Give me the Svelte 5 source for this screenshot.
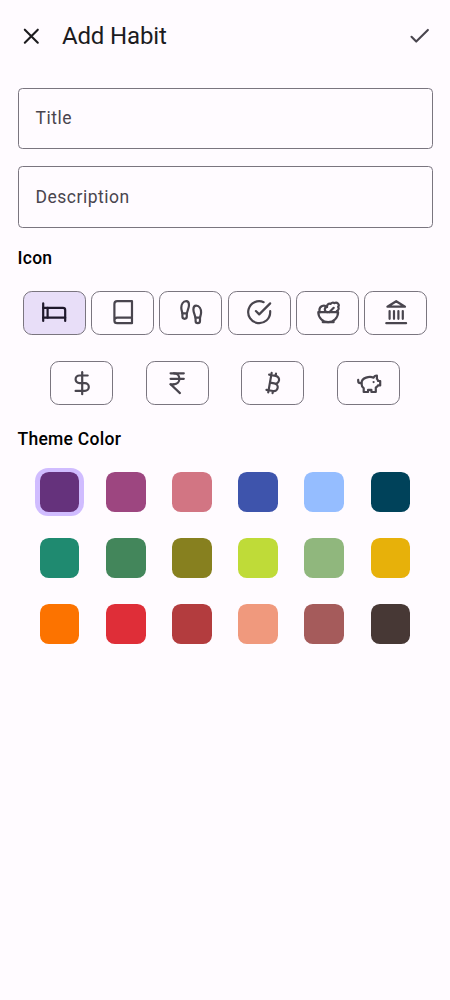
<script>
  const iconRows = [
    [
      { name: 'Bed', paths: ['M2 4v16', 'M2 8h18a2 2 0 0 1 2 2v10', 'M2 17h20', 'M6 8v9'] },
      { name: 'Book', paths: ['M4 19.5v-15A2.5 2.5 0 0 1 6.5 2H20v20H6.5a2.5 2.5 0 0 1 0-5H20'] },
      {
        name: 'Footprints',
        paths: [
          'M4 16v-2.38C4 11.5 2.97 10.5 3 8c.03-2.72 1.49-6 4.5-6C9.37 2 10 3.8 10 5.5c0 3.11-2 5.66-2 8.68V16a2 2 0 1 1-4 0Z',
          'M20 20v-2.38c0-2.12 1.03-3.12 1-5.62-.03-2.72-1.49-6-4.5-6C14.63 6 14 7.8 14 9.5c0 3.11 2 5.66 2 8.68V20a2 2 0 1 0 4 0Z',
          'M16 17h4',
          'M4 13h4'
        ]
      },
      { name: 'Check', paths: ['M22 11.08V12a10 10 0 1 1-5.93-9.14', 'm9 11 3 3L22 4'] },
      {
        name: 'Salad',
        paths: [
          'M7 21h10',
          'M12 21a9 9 0 0 0 9-9H3a9 9 0 0 0 9 9Z',
          'M11.38 12a2.4 2.4 0 0 1-.4-4.77 2.4 2.4 0 0 1 3.2-2.77 2.4 2.4 0 0 1 3.47-.63 2.4 2.4 0 0 1 3.37 3.37 2.4 2.4 0 0 1-1.1 3.7 2.51 2.51 0 0 1 .03 1.1',
          'm13 12 4-4',
          'M10.9 7.25A3.99 3.99 0 0 0 4 10c0 .73.2 1.41.54 2'
        ]
      },
      { name: 'Bank', paths: ['M3 22h18', 'M6 18v-7', 'M10 18v-7', 'M14 18v-7', 'M18 18v-7', 'M12 2l8 5H4z'] }
    ],
    [
      { name: 'Dollar', paths: ['M12 2v20', 'M17 5H9.5a3.5 3.5 0 0 0 0 7h5a3.5 3.5 0 0 1 0 7H6'] },
      { name: 'Rupee', paths: ['M6 3h12', 'M6 8h12', 'm6 13 8.5 8', 'M6 13h3', 'M9 13c6.667 0 6.667-10 0-10'] },
      {
        name: 'Bitcoin',
        paths: [
          'M11.767 19.089c4.924.868 6.14-6.025 1.216-6.894m-1.216 6.894L5.86 18.047m5.908 1.042-.347 1.97m1.563-8.864c4.924.869 6.14-6.025 1.215-6.893m-1.215 6.893-3.94-.694m5.155-6.2L8.29 4.26m5.908 1.042.348-1.97M7.48 20.364l3.126-17.727'
        ]
      },
      {
        name: 'Savings',
        paths: [
          'M19 5c-1.5 0-2.8 1.4-3 2-3.5-1.5-11-.3-11 5 0 1.8 0 3 2 4.5V20h4v-2h3v2h4v-4c1-.5 1.7-1 2-2h2v-4h-2c0-1-.5-1.5-1-2V5z',
          'M2 9v1c0 1.1.9 2 2 2h1',
          'M16 11h.01'
        ]
      }
    ]
  ];

  const colorRows = [
    ['#65327c', '#9d4680', '#d27583', '#3e54ac', '#95bdff', '#00425a'],
    ['#1f8a70', '#43865b', '#87801f', '#bfdb38', '#90b77d', '#e7b10a'],
    ['#fc7300', '#df2e38', '#b33c3e', '#f0997d', '#a55b5b', '#473835']
  ];

  let selectedIcon = $state('Bed');
  let selectedColor = $state('#65327c');
</script>

<div class="screen">
  <header>
    <button class="plain" aria-label="Close">
      <svg viewBox="0 0 24 24"><path d="M18 6.1 6.2 17.9M6.2 6.1 18 17.9" /></svg>
    </button>
    <h1>Add Habit</h1>
    <button class="plain save" aria-label="Save">
      <svg viewBox="0 0 24 24"><path d="M19.9 6.3 9.3 16.9 5 12.6" /></svg>
    </button>
  </header>

  <main>
    <div class="field">Title</div>
    <div class="field">Description</div>

    <h2>Icon</h2>
    <div class="icons">
      {#each iconRows as row}
        <div class="icon-row">
          {#each row as icon}
            <button
              class="chip"
              class:selected={selectedIcon === icon.name}
              aria-label={icon.name}
              onclick={() => (selectedIcon = icon.name)}
            >
              <svg viewBox="0 0 24 24">
                {#each icon.paths as d}<path {d} />{/each}
              </svg>
            </button>
          {/each}
        </div>
      {/each}
    </div>

    <h2 class="theme">Theme Color</h2>
    <div class="colors">
      {#each colorRows as row}
        <div class="color-row">
          {#each row as color}
            <button
              class="swatch"
              class:selected={selectedColor === color}
              aria-label={color}
              onclick={() => (selectedColor = color)}
            >
              <span style:background={color}></span>
            </button>
          {/each}
        </div>
      {/each}
    </div>
  </main>
</div>

<style>
  :global(body) {
    margin: 0;
    background: #fffbff;
  }
  .screen {
    box-sizing: border-box;
    width: 450px;
    height: 1000px;
    overflow: hidden;
    background: #fffbff;
    color: #1c1b1e;
    font-family: Roboto, sans-serif;
  }
  button {
    box-sizing: border-box;
    margin: 0;
    padding: 0;
    border: 0;
    background: none;
    color: inherit;
  }
  svg {
    display: block;
    width: 26.4px;
    height: 26.4px;
    fill: none;
    stroke: currentColor;
    stroke-width: 2;
    stroke-linecap: round;
    stroke-linejoin: round;
  }
  .plain svg {
    stroke-width: 1.9;
  }
  header {
    box-sizing: border-box;
    display: flex;
    align-items: center;
    height: 71px;
    padding: 1px 17.5px 0;
  }
  h1 {
    flex: 1;
    margin: 0 0 0 18px;
    font-size: 24px;
    line-height: 31px;
    font-weight: 400;
    letter-spacing: -0.13px;
  }
  .save {
    color: #49454e;
  }
  main {
    display: flex;
    flex-direction: column;
    padding: 16.5px 17.5px 0;
  }
  .field {
    box-sizing: border-box;
    display: flex;
    align-items: center;
    height: 61.3px;
    margin-bottom: 17.6px;
    padding: 0 17px;
    border: 1px solid #7a757f;
    border-radius: 4.4px;
    color: #49454e;
    font-size: 17.5px;
    letter-spacing: 0.5px;
  }
  h2 {
    margin: 2px 0 0;
    font-size: 17.5px;
    line-height: 22px;
    font-weight: 500;
    letter-spacing: 0.27px;
    color: #000;
  }
  .icons {
    display: flex;
    flex-direction: column;
    gap: 26.6px;
    margin-top: 22px;
  }
  .icon-row,
  .color-row {
    display: flex;
    justify-content: space-evenly;
  }
  .chip {
    display: flex;
    align-items: center;
    justify-content: center;
    width: 63.2px;
    height: 43.6px;
    padding: 0 0 0.8px 0.8px;
    border: 1px solid #7a757f;
    border-radius: 8.8px;
    color: #49454e;
  }
  .chip.selected {
    background: #e8def8;
    color: #1e182b;
  }
  .theme {
    margin-top: 23px;
  }
  .colors {
    display: flex;
    flex-direction: column;
    gap: 17.6px;
    margin-top: 17.6px;
  }
  .swatch {
    width: 48.6px;
    height: 48.6px;
    padding: 4.4px;
    border-radius: 13.2px;
  }
  .swatch.selected {
    background: #d0bcff;
  }
  .swatch span {
    display: block;
    width: 100%;
    height: 100%;
    border-radius: 8.8px;
  }
</style>
